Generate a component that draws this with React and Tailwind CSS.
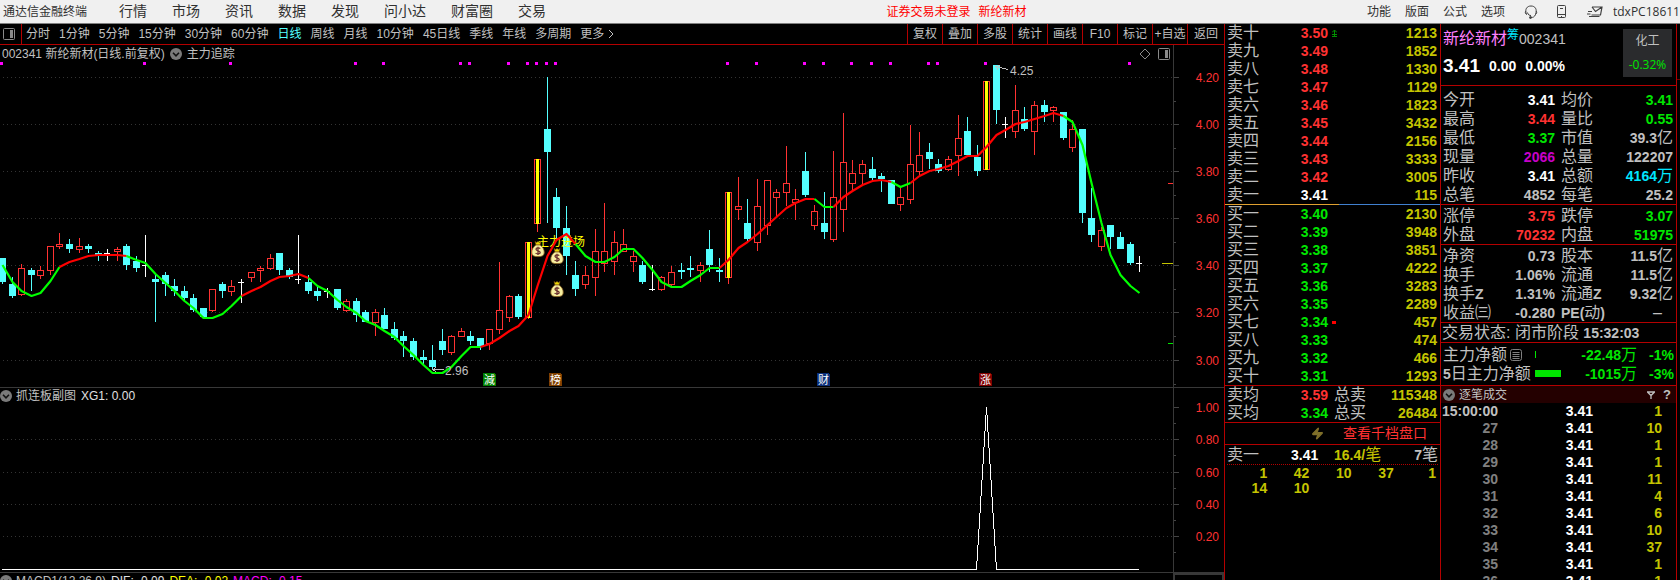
import { Zap } from 'lucide-react';

const MENU = ['行情', '市场', '资讯', '数据', '发现', '问小达', '财富圈', '交易'];
const PERIODS = ['分时', '1分钟', '5分钟', '15分钟', '30分钟', '60分钟', '日线', '周线', '月线', '10分钟', '45日线', '季线', '年线', '多周期'];
const TOOLS = ['复权', '叠加', '多股', '统计', '画线', 'F10', '标记', '+自选', '返回'];

const RED = 'text-[#ff3232]';
const GREEN = 'text-[#00e600]';
const YELLOW = 'text-[#c4c400]';
const GRAY = 'text-[#c0c0c0]';

// kind (u up, d down, w flat, y limit-up), high, body top, body bottom, low
const CANDLES = [
  ['d', 258, 258, 282, 284], ['d', 277, 284, 296, 298], ['u', 264, 268, 295, 296], ['d', 268, 270, 275, 291],
  ['u', 266, 270, 276, 279], ['u', 246, 246, 271, 275], ['u', 233, 244, 247, 249], ['d', 239, 244, 249, 253],
  ['u', 238, 246, 250, 253], ['d', 244, 246, 249, 253], ['d', 251, 253, 255, 261], ['w', 249, 253, 254, 261],
  ['u', 247, 249, 252, 261], ['d', 244, 246, 265, 270], ['d', 256, 261, 268, 272], ['w', 235, 265, 266, 277],
  ['d', 275, 279, 282, 322], ['d', 272, 275, 284, 296], ['d', 279, 286, 291, 296], ['d', 286, 291, 298, 300],
  ['d', 294, 298, 310, 312], ['d', 308, 308, 317, 319], ['u', 289, 289, 311, 312], ['d', 282, 284, 291, 298],
  ['u', 280, 286, 292, 296], ['w', 279, 282, 283, 303], ['u', 272, 272, 278, 282], ['u', 266, 268, 271, 282],
  ['u', 254, 258, 269, 270], ['d', 253, 253, 270, 275], ['d', 268, 270, 277, 279], ['w', 235, 279, 280, 284],
  ['d', 275, 282, 291, 294], ['d', 287, 291, 296, 301], ['w', 288, 291, 292, 298], ['d', 289, 289, 308, 310],
  ['u', 299, 301, 311, 312], ['d', 298, 301, 315, 322], ['d', 310, 312, 322, 322], ['u', 309, 312, 323, 336],
  ['d', 308, 315, 329, 329], ['d', 322, 329, 338, 340], ['d', 331, 336, 341, 357], ['d', 338, 341, 357, 360],
  ['d', 350, 357, 360, 364], ['d', 345, 360, 367, 370], ['d', 329, 341, 350, 355], ['u', 335, 336, 353, 355],
  ['u', 328, 331, 337, 337], ['d', 331, 336, 341, 345], ['d', 338, 338, 347, 350], ['u', 329, 329, 344, 350],
  ['u', 262, 310, 330, 334], ['u', 295, 296, 318, 322], ['d', 294, 296, 317, 319], ['y', 242, 242, 318, 319],
  ['y', 159, 159, 224, 232], ['d', 77, 129, 152, 223], ['d', 188, 197, 228, 238], ['d', 206, 228, 256, 275],
  ['d', 261, 275, 289, 296], ['u', 266, 275, 285, 289], ['u', 229, 251, 278, 296], ['u', 203, 251, 264, 272],
  ['u', 231, 242, 262, 275], ['u', 229, 244, 252, 252], ['u', 251, 256, 262, 272], ['d', 261, 265, 282, 284],
  ['w', 265, 289, 290, 291], ['u', 276, 277, 290, 291], ['u', 266, 272, 285, 286], ['d', 263, 270, 272, 279],
  ['d', 256, 268, 270, 277], ['u', 262, 265, 271, 282], ['d', 230, 249, 265, 272], ['d', 258, 270, 272, 282],
  ['y', 192, 192, 278, 284], ['u', 177, 206, 210, 220], ['d', 199, 223, 239, 241], ['u', 179, 206, 243, 251],
  ['u', 180, 180, 226, 235], ['u', 189, 192, 198, 216], ['u', 146, 183, 193, 206], ['u', 189, 199, 203, 220],
  ['d', 152, 171, 195, 197], ['u', 205, 211, 226, 230], ['d', 192, 223, 232, 239], ['u', 151, 197, 240, 242],
  ['u', 113, 162, 210, 232], ['u', 160, 173, 184, 190], ['u', 160, 164, 174, 185], ['d', 157, 169, 178, 180],
  ['d', 173, 176, 179, 192], ['d', 180, 180, 204, 204], ['u', 188, 197, 205, 211], ['u', 125, 164, 200, 204],
  ['u', 132, 155, 172, 176], ['d', 143, 152, 159, 169], ['d', 159, 164, 171, 173], ['u', 156, 159, 170, 171],
  ['u', 115, 138, 156, 176], ['d', 117, 131, 155, 155], ['d', 145, 157, 171, 176], ['y', 81, 81, 170, 170],
  ['d', 65, 65, 110, 124], ['w', 117, 124, 125, 138], ['u', 85, 110, 132, 138], ['d', 107, 119, 129, 131],
  ['u', 101, 105, 132, 155], ['d', 100, 105, 112, 122], ['u', 106, 107, 111, 122], ['d', 112, 112, 138, 140],
  ['u', 120, 129, 148, 152], ['d', 129, 129, 213, 223], ['d', 188, 218, 235, 242], ['u', 227, 230, 247, 251],
  ['d', 225, 225, 237, 249], ['d', 232, 237, 249, 249], ['d', 242, 244, 263, 265], ['w', 256, 263, 264, 272],
];

const TREND = [
  265, 282, 291, 296, 293, 281, 267, 262, 259, 256, 255, 255, 255, 256, 260, 263, 274, 283, 291, 301,
  308, 318, 318, 314, 306, 296, 291, 287, 281, 277, 276, 274, 278, 286, 291, 300, 307, 313, 321, 325,
  331, 337, 346, 355, 365, 373, 373, 367, 356, 347, 347, 344, 338, 331, 326, 315, 286, 256, 240, 234,
  244, 256, 262, 262, 257, 249, 249, 258, 270, 282, 287, 287, 281, 275, 268, 268, 260, 248, 242, 234,
  225, 217, 208, 203, 199, 199, 207, 207, 197, 191, 185, 181, 180, 182, 187, 183, 176, 171, 169, 166,
  161, 156, 156, 147, 135, 130, 124, 122, 119, 116, 113, 116, 122, 145, 183, 223, 255, 275, 286, 293,
];

// color, first bar and last bar of each run
const TREND_RUNS = [
  ['#00ff00', 0, 6], ['#ff0000', 6, 13], ['#00ff00', 13, 25], ['#ff0000', 25, 32], ['#00ff00', 32, 50],
  ['#ff0000', 50, 60], ['#00ff00', 60, 75], ['#ff0000', 75, 85], ['#00ff00', 85, 87], ['#ff0000', 87, 93],
  ['#00ff00', 93, 95], ['#ff0000', 95, 111], ['#00ff00', 111, 119],
];

const EVENTS = [0, 15, 24, 37, 40, 48, 49, 53, 55, 56, 57, 58, 76, 79, 84, 86, 89, 91, 93, 97, 98, 103, 118];

const MAIN_AXIS = [['4.20', 77], ['4.00', 124], ['3.80', 171], ['3.60', 218], ['3.40', 265], ['3.20', 312], ['3.00', 360]];
const SUB_AXIS = [['1.00', 407], ['0.80', 439], ['0.60', 472], ['0.40', 504], ['0.20', 536]];

const BADGES = [['減', 483, '#007f00'], ['榜', 549, '#7f3f00'], ['财', 817, '#0b2f7a'], ['涨', 979, '#800000']];
const BAGS = [[538, 249], [557, 256], [557, 289]];

const ASKS = [
  ['卖十', '3.50', 1213], ['卖九', '3.49', 1852], ['卖八', '3.48', 1330], ['卖七', '3.47', 1129], ['卖六', '3.46', 1823],
  ['卖五', '3.45', 3432], ['卖四', '3.44', 2156], ['卖三', '3.43', 3333], ['卖二', '3.42', 3005], ['卖一', '3.41', 115],
];
const BIDS = [
  ['买一', '3.40', 2130], ['买二', '3.39', 3948], ['买三', '3.38', 3851], ['买四', '3.37', 4222], ['买五', '3.36', 3283],
  ['买六', '3.35', 2289], ['买七', '3.34', 457], ['买八', '3.33', 474], ['买九', '3.32', 466], ['买十', '3.31', 1293],
];

const QUOTES = [
  [
    ['今开', '3.41', 'text-white', '均价', '3.41', GREEN],
    ['最高', '3.44', RED, '量比', '0.55', GREEN],
    ['最低', '3.37', GREEN, '市值', '39.3亿', GRAY],
    ['现量', '2066', 'text-[#c800c8]', '总量', '122207', GRAY],
    ['昨收', '3.41', 'text-white', '总额', '4164万', 'text-[#00e6ff]'],
    ['总笔', '4852', GRAY, '每笔', '25.2', GRAY],
  ],
  [
    ['涨停', '3.75', RED, '跌停', '3.07', GREEN],
    ['外盘', '70232', RED, '内盘', '51975', GREEN],
  ],
  [
    ['净资', '0.73', GRAY, '股本', '11.5亿', GRAY],
    ['换手', '1.06%', GRAY, '流通', '11.5亿', GRAY],
    ['换手Z', '1.31%', GRAY, '流通Z', '9.32亿', GRAY],
    ['收益㈢', '-0.280', GRAY, 'PE(动)', '–', GRAY],
  ],
];

const TICKS = [
  ['15:00:00', 1], ['27', 10], ['28', 1], ['29', 1], ['30', 11], ['31', 4],
  ['32', 6], ['33', 10], ['34', 37], ['35', 1], ['36', 1],
];

const barX = (i) => Math.floor(2.6 + 9.555 * i);

// Numbers are small and bold, Chinese labels larger and regular
function Mixed({ children }) {
  return String(children).split(/([\x21-\x7e]+)/).filter(Boolean).map((part, i) => (
    <span key={i} className={/^[\x21-\x7e]/.test(part) ? 'text-[14px] leading-[14px] font-bold' : 'text-[16px] leading-[16px] font-normal'}>{part}</span>
  ));
}

function PanelIcon() {
  return (
    <svg width="12" height="12" viewBox="0 0 12 12" className="shrink-0">
      <rect x="0.5" y="0.5" width="11" height="11" rx="1" fill="none" stroke="#8a8a8a" />
      <rect x="7" y="2" width="3" height="8" fill="#8a8a8a" />
    </svg>
  );
}

function Chevron() {
  return (
    <svg width="12" height="12" viewBox="0 0 12 12" className="shrink-0">
      <circle cx="6" cy="6" r="6" fill="#7a7a7a" />
      <path d="M3 4.8 6 7.8 9 4.8" fill="none" stroke="#111" strokeWidth="1.6" />
    </svg>
  );
}

function MoneyBag({ x, y }) {
  return (
    <g transform={`translate(${x - 7} ${y - 8})`}>
      <path d="M4 0.5 5.5 1.5 7 0.5 8.5 1.5 10 0.5 9 4H5z" fill="#e8d800" stroke="#7a4a10" strokeWidth="0.6" />
      <path d="M5 4H9C12 6 13.5 9 13.2 12 13 15 10.5 15.6 7 15.6S1 15 .8 12C.5 9 2 6 5 4z" fill="#f7efa0" stroke="#8a6020" strokeWidth="0.8" />
      <path d="M9.2 7.6C8.4 6.6 5 6.4 5 8.3S9.2 9.6 9.2 11.4 5.4 13.2 4.6 12M7 5.8V14" fill="none" stroke="#6b3030" strokeWidth="1.3" />
    </g>
  );
}

function Candle({ i, bar }) {
  const [kind, high, top, bottom, low] = bar;
  const x = barX(i);
  if (kind === 'w') {
    return (
      <g fill="#ffffff">
        <rect x={x} y={high} width="1" height={low - high} />
        <rect x={x - 3} y={top} width="6" height="1" />
      </g>
    );
  }
  if (kind === 'd') {
    return (
      <g fill="#54ffff">
        <rect x={x} y={high} width="1" height={low - high} />
        <rect x={x - 3} y={top} width="7" height={bottom - top} />
      </g>
    );
  }
  return (
    <g fill="#ff3232">
      <rect x={x} y={high} width="1" height={top - high} />
      <rect x={x} y={bottom} width="1" height={low - bottom} />
      <rect x={x - 3 + 0.5} y={top + 0.5} width="6" height={bottom - top - 1} fill="none" stroke="#ff3232" />
      {kind === 'y' && <rect x={x - 1} y={top} width="3" height={bottom - top} fill="#ffff00" />}
    </g>
  );
}

function GridLines({ axis }) {
  return axis.map(([label, y]) => (
    <line key={label} x1="3" x2="100%" y1={y + 0.5} y2={y + 0.5} stroke="#333333" strokeDasharray="1 3" />
  ));
}

function Axis({ axis, offset, half, className }) {
  return (
    <svg className={className} fontSize="12" fill="#ff3232">
      <g transform={`translate(0 ${-offset})`}>
        {axis.map(([label, y]) => (
          <g key={label}>
            <path d={`M0 ${y + 0.5}h5M0 ${y + half + 0.5}h2`} stroke="#444" />
            <text x="45" y={y + 5} textAnchor="end">{label}</text>
          </g>
        ))}
      </g>
    </svg>
  );
}

function MainPlot() {
  return (
    <svg className="block h-[325px] w-full" shapeRendering="crispEdges">
      <g transform="translate(0 -62)">
        <GridLines axis={MAIN_AXIS} />
        {EVENTS.map((i) => <rect key={i} x={barX(i) - 2} y="62" width="3" height="3" fill="#ff00ff" />)}
        {CANDLES.map((bar, i) => <Candle key={i} i={i} bar={bar} />)}
        <text x="537" y="246" fontSize="12" fill="#ffff00">主力进场</text>
        {TREND_RUNS.map(([color, from, to]) => (
          <polyline
            key={from}
            fill="none"
            stroke={color}
            strokeWidth="2.2"
            strokeLinejoin="round"
            shapeRendering="auto"
            points={TREND.slice(from, to + 1).map((y, n) => `${barX(from + n) + 0.5},${y}`).join(' ')}
          />
        ))}
        <g shapeRendering="auto">
          {BAGS.map(([x, y]) => <MoneyBag key={y} x={x} y={y} />)}
        </g>
        {BADGES.map(([label, x, fill]) => (
          <g key={label}>
            <path d={`M${x} 373h11l2 2v11h-13z`} fill={fill} />
            <text x={x + 1} y="384" fontSize="11" fill="#ffffff">{label}</text>
          </g>
        ))}
        <g stroke="#c0c0c0" fill="none">
          <path d="M444 369.5H433M436 367.5L433 369.5L436 372" />
          <path d="M1008 69.5L996 66.5M1000 65.5L996 66.5L998 69.5" />
        </g>
        <g fontSize="12" fill="#c0c0c0">
          <text x="445" y="375">2.96</text>
          <text x="1010" y="75">4.25</text>
        </g>
        <svg x="100%" overflow="visible">
          <rect x="-5" y="183" width="5" height="1" fill="#ff3232" />
          <rect x="-11" y="263" width="11" height="1" fill="#c4c400" />
          <rect x="-5" y="343" width="5" height="1" fill="#00e600" />
        </svg>
      </g>
    </svg>
  );
}

function SubPlot() {
  return (
    <svg className="block h-[168px] w-full">
      <g transform="translate(0 -404)">
        <GridLines axis={SUB_AXIS.slice(1)} />
        <path d="M2 569.5H976.5L986.5 407L996.5 569.5H1139" fill="none" stroke="#ffffff" shapeRendering="crispEdges" />
      </g>
    </svg>
  );
}

function TopBar() {
  return (
    <header className="flex h-[24px] shrink-0 items-center justify-between overflow-hidden border-b border-[#808080] bg-[#f0f0f0] text-[12px] whitespace-nowrap text-[#303030]">
      <div className="flex items-center">
        <span className="ml-[3px] w-[116px]">通达信金融终端</span>
        <nav className="flex gap-[25px] text-[14px]">
          {MENU.map((item) => <button key={item}>{item}</button>)}
        </nav>
      </div>
      <div className="flex gap-2 text-[#ff0000]">
        <span>证券交易未登录</span>
        <span>新纶新材</span>
      </div>
      <div className="flex items-center">
        <div className="flex gap-[14px]">
          {['功能', '版面', '公式', '选项'].map((item) => <button key={item}>{item}</button>)}
        </div>
        <svg width="14" height="14" viewBox="0 0 14 14" className="ml-[19px]" fill="none" stroke="#404040">
          <path d="M2.5 9.5C.5 4 3 1 7 1s6.5 3 4.5 8.5M2.5 9.5C1 8.5 1 6.500 2 6M11.5 9.5C13 8.5 13 6.500 12 6M11.5 9.5C10.5 12 9 12.5 7 12.5M3.5 7.5C4 10 5.5 10.5 7 10.5" />
          <circle cx="6.5" cy="12.5" r="1" fill="#404040" />
        </svg>
        <svg width="9" height="13" viewBox="0 0 9 13" className="ml-[19px]" fill="none" stroke="#404040">
          <rect x="0.5" y="0.5" width="8" height="12" rx="1" />
          <path d="M1 9.5H8M3 3.5H6M4 11.5H5" />
        </svg>
        <svg width="16" height="12" viewBox="0 0 16 12" className="ml-[21px]" fill="none" stroke="#404040" strokeWidth="1.2">
          <path d="M5 1H15L13.5 9H4.5M5 1 8.5 5.5 15 1M1 5.5H5M0 8H3.5M2 10.5H12.5" />
        </svg>
        <span className="ml-[10px] w-[67px] overflow-hidden font-['Open_Sans'] text-[12px]">tdxPC18611</span>
      </div>
    </header>
  );
}

function Toolbar() {
  return (
    <div className="flex h-[21px] shrink-0 items-stretch overflow-hidden border-b border-[#b40000] text-[12px] whitespace-nowrap">
      <button className="flex w-[22px] items-center border-r border-[#b40000] pl-[3px]" aria-label="侧栏"><PanelIcon /></button>
      <nav className="flex flex-1 items-center gap-[9px] pl-[4px]">
        {PERIODS.map((item) => (
          <button key={item} className={item === '日线' ? 'text-[#54ffff]' : ''}>{item}</button>
        ))}
        <button className="flex items-center gap-1">
          更多
          <svg width="6" height="10" viewBox="0 0 6 10" fill="none" stroke="#c0c0c0"><path d="M1 1 5 5 1 9" /></svg>
        </button>
      </nav>
      {TOOLS.map((item) => (
        <button key={item} className="w-[35px] border-l border-[#b40000] last:w-[37px]">{item}</button>
      ))}
    </div>
  );
}

function Charts() {
  return (
    <main className="flex min-w-0 flex-1 flex-col overflow-hidden">
      <Toolbar />
      <section className="flex shrink-0 border-b border-[#383838]">
        <div className="min-w-0 flex-1">
          <div className="flex h-[17px] items-center gap-[5px] pl-[2px] text-[12px] whitespace-nowrap">
            <span>002341 新纶新材(日线.前复权)</span>
            <Chevron />
            <span>主力追踪</span>
            <svg width="12" height="12" viewBox="0 0 12 12" className="mr-[2px] ml-auto" fill="none" stroke="#8a8a8a">
              <path d="M6 1 11 6 6 11 1 6z" />
            </svg>
            <span className="mr-[3px]"><PanelIcon /></span>
          </div>
          <MainPlot />
        </div>
        <div className="w-[51px] shrink-0 border-l border-[#383838]">
          <Axis axis={MAIN_AXIS} offset={45} half={24} className="block h-[342px] w-full" />
        </div>
      </section>
      <section className="flex shrink-0 border-b border-[#383838]">
        <div className="min-w-0 flex-1">
          <div className="flex h-[16px] items-center text-[12px]">
            <Chevron />
            <span className="ml-[4px]">抓连板副图</span>
            <span className="ml-[5px] text-[#e0e0e0]">XG1: 0.00</span>
          </div>
          <SubPlot />
        </div>
        <div className="w-[51px] shrink-0 border-l border-[#383838]">
          <Axis axis={SUB_AXIS} offset={388} half={16} className="block h-[184px] w-full" />
        </div>
      </section>
      <section className="flex flex-1 overflow-hidden">
        <div className="flex h-[16px] min-w-0 flex-1 items-center text-[12px] leading-[16px] whitespace-nowrap">
          <Chevron />
          <span className="ml-[4px]">MACD1(12,26,9)</span>
          <span className="ml-[5px] text-[#e0e0e0]">DIF: -0.09</span>
          <span className="ml-[5px] text-[#ffff00]">DEA: -0.02</span>
          <span className="ml-[5px] text-[#ff00ff]">MACD: -0.15</span>
        </div>
        <div className="w-[51px] shrink-0 border-2 border-b-0 border-[#383838]" />
      </section>
    </main>
  );
}

function PriceCell({ price, color }) {
  return (
    <td className={`w-[60px] text-right text-[14px] font-bold ${color}`}>{price}</td>
  );
}

function BookTable({ rows, color }) {
  return (
    <table className="w-full table-fixed">
      <tbody>
        {rows.map(([label, price, volume]) => (
          <tr key={label} className="h-[18px] leading-[18px]">
            <th scope="row" className="w-[43px] pl-[2px] text-left text-[16px] font-normal">{label}</th>
            <PriceCell price={price} color={price === '3.41' ? 'text-white' : color} />
            <td className="w-[20px] pl-[4px]">
              {price === '3.50' && (
                <svg width="5" height="7" viewBox="0 0 5 7" className="block" fill="none" stroke="#009000"><path d="M0 2.5 2.5 0 5 2.5M2.5 0V6.5M0 4.5H5M0 6.5H5" /></svg>
              )}
              {price === '3.34' && <span className="block h-[3px] w-[4px] bg-[#ff0000]" />}
            </td>
            <td className={`pr-[3px] text-right text-[14px] font-bold ${YELLOW}`}>{volume}</td>
          </tr>
        ))}
      </tbody>
    </table>
  );
}

function OrderBook() {
  return (
    <section className="w-[216px] shrink-0 overflow-hidden border-l border-[#b40000]">
      <BookTable rows={ASKS} color={RED} />
      <div className="flex h-px">
        <div className="w-[53%] bg-[#e0a030]" />
        <div className="flex-1 bg-[#4080d0]" />
      </div>
      <BookTable rows={BIDS} color={GREEN} />
      <table className="w-full table-fixed border-y border-[#b40000]">
        <tbody>
          {[['卖均', '3.59', RED, '总卖', 115348], ['买均', '3.34', GREEN, '总买', 26484]].map(([a, price, color, b, total]) => (
            <tr key={a} className="h-[18px] leading-[18px]">
              <th scope="row" className="w-[43px] pl-[2px] text-left text-[16px] font-normal">{a}</th>
              <PriceCell price={price} color={color} />
              <th scope="row" className="w-[42px] pl-[6px] text-left text-[16px] font-normal">{b}</th>
              <td className={`pr-[3px] text-right text-[14px] font-bold ${YELLOW}`}>{total}</td>
            </tr>
          ))}
        </tbody>
      </table>
      <button className="flex h-[22px] w-full items-center justify-end gap-[19px] border-b border-[#b40000] pr-[13px] text-[14px] text-[#ff3232]">
        <Zap size={13} fill="#80702a" stroke="#80702a" strokeWidth={2} />
        查看千档盘口
      </button>
      <div className="mx-[2px] flex h-[20px] items-center border-b border-dotted border-[#b40000] leading-[20px]">
        <span className="w-[64px]"><Mixed>卖一</Mixed></span>
        <span className="w-[43px] text-white"><Mixed>3.41</Mixed></span>
        <span className={YELLOW}><Mixed>16.4/笔</Mixed></span>
        <span className="ml-auto"><Mixed>7笔</Mixed></span>
      </div>
      <div className={`grid grid-cols-5 pt-px pr-[4px] text-right text-[14px] leading-[15px] font-bold ${YELLOW}`}>
        {[1, 42, 10, 37, 1, 14, 10].map((n, i) => <span key={i}>{n}</span>)}
      </div>
    </section>
  );
}

function QuotePanel() {
  return (
    <section className="w-[237px] shrink-0 overflow-hidden border-x border-[#b40000]">
      <div className="flex h-[62px] justify-between border-b border-[#b40000] pr-[4px] pl-[2px]">
        <div>
          <div className="flex h-[30px] items-center">
            <span className="text-[16px] text-[#ff80ff]">新纶新材</span>
            <span className="mb-[8px] text-[12px] leading-[12px] text-[#00e6ff]">筹</span>
            <span className="text-[14px]">002341</span>
          </div>
          <div className="flex h-[24px] items-center gap-[9px] text-[14px] font-bold text-white">
            <span className="text-[19px]">3.41</span>
            <span>0.00</span>
            <span>0.00%</span>
          </div>
        </div>
        <div className="mt-[5px] flex h-[48px] w-[49px] flex-col items-center justify-around bg-[#2a2b2d] text-[12px]">
          <span>化工</span>
          <span className="font-['Open_Sans'] text-[#00e600]">-0.32%</span>
        </div>
      </div>
      {QUOTES.map((rows, n) => (
        <div key={n} className={n === 0 ? 'border-b border-[#b40000] pt-[4px]' : 'border-b border-[#b40000] pt-px'}>
          <table className="w-full table-fixed">
            <tbody>
              {rows.map(([a, av, ac, b, bv, bc]) => (
                <tr key={a} className="h-[19px] leading-[19px] whitespace-nowrap">
                  <th scope="row" className="w-[52px] pl-[2px] text-left font-normal"><Mixed>{a}</Mixed></th>
                  <td className={`w-[62px] text-right ${ac}`}><Mixed>{av}</Mixed></td>
                  <th scope="row" className="w-[56px] pl-[6px] text-left font-normal"><Mixed>{b}</Mixed></th>
                  <td className={`text-right ${bc} ${bv === '–' ? 'pr-[14px]' : 'pr-[3px]'}`}><Mixed>{bv}</Mixed></td>
                </tr>
              ))}
            </tbody>
          </table>
        </div>
      ))}
      <div className="h-[20px] border-b border-[#b40000] pl-px leading-[19px] whitespace-nowrap">
        <span className="text-[16px]">交易状态: 闭市阶段 </span>
        <span className="text-[14px] leading-[14px] font-bold">15:32:03</span>
      </div>
      <div className="border-b border-[#b40000] py-[2px] pl-[2px] leading-[19px] whitespace-nowrap">
        <div className="flex h-[19px] items-center">
          <span className="flex w-[92px] items-center gap-[3px]">
            <Mixed>主力净额</Mixed>
            <svg width="12" height="12" viewBox="0 0 12 12" fill="none" stroke="#808080">
              <rect x="0.5" y="0.5" width="11" height="11" rx="2" />
              <path d="M2.5 3.5H9.5M2.5 5.5H9.5M2.5 7.5H9.5M2.5 9.5H9.5" />
            </svg>
          </span>
          <span className="h-[7px] w-px bg-[#00e600]" />
          <span className={`ml-auto ${GREEN}`}><Mixed>-22.48万</Mixed></span>
          <span className={`w-[39px] pr-[2px] text-right ${GREEN}`}><Mixed>-1%</Mixed></span>
        </div>
        <div className="flex h-[19px] items-center">
          <span className="w-[92px]"><Mixed>5日主力净额</Mixed></span>
          <span className="h-[7px] w-[26px] bg-[#00e600]" />
          <span className={`ml-auto ${GREEN}`}><Mixed>-1015万</Mixed></span>
          <span className={`w-[39px] pr-[2px] text-right ${GREEN}`}><Mixed>-3%</Mixed></span>
        </div>
      </div>
      <div className="flex h-[17px] items-center bg-[#240000] pr-[5px] pl-[2px] text-[12px]">
        <Chevron />
        <span className="ml-[4px]">逐笔成交</span>
        <button className="ml-auto" aria-label="筛选">
          <svg width="8" height="8" viewBox="0 0 8 8" className="block" fill="none" stroke="#c0c0c0" strokeWidth="1.3"><path d="M0.5 1H7.5L4 4.5zM4 4V8" /></svg>
        </button>
        <button className="ml-[8px] text-[13px] font-bold">?</button>
      </div>
      <table className="w-full table-fixed text-right text-[14px] font-bold">
        <tbody>
          {TICKS.map(([time, volume], i) => (
            <tr key={time} className="h-[17px] leading-[17px]">
              <td className={i === 0 ? 'w-[57px]' : 'w-[57px] text-[#808080]'}>{time}</td>
              <td className="w-[95px] text-white">3.41</td>
              <td className={`pr-[14px] ${YELLOW}`}>{volume}</td>
            </tr>
          ))}
        </tbody>
      </table>
    </section>
  );
}

export default function App() {
  return (
    <div className="flex h-screen flex-col overflow-hidden bg-black font-['Liberation_Sans','Noto_Sans_CJK_SC',sans-serif] text-[#c0c0c0]">
      <TopBar />
      <div className="flex min-h-0 flex-1">
        <Charts />
        <OrderBook />
        <QuotePanel />
        <div className="w-[3px] shrink-0 pt-[55px]">
          <div className="h-px bg-[#700000]" />
        </div>
      </div>
    </div>
  );
}
